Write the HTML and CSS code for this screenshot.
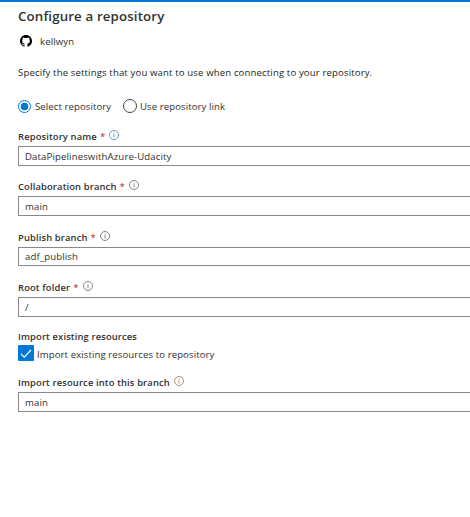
FILE: index.html
```html
<!DOCTYPE html>
<html lang="en">
<head>
<meta charset="utf-8">
<title>Configure a repository</title>
<link rel="stylesheet" href="styles.css">
</head>
<body>
<svg class="symbols" aria-hidden="true">
  <symbol id="info" viewBox="0 0 10 10"><circle cx="5" cy="5" r="4.5" fill="none" stroke="currentColor" stroke-width=".9"/><path d="M5 4.2v3.2M5 2.5v.9" stroke="currentColor" stroke-width=".9"/></symbol>
</svg>
<main class="panel">
  <h1 class="title">Configure a repository</h1>
  <div class="account">
    <svg class="github" viewBox="0 0 16 16"><path d="M8 0C3.58 0 0 3.58 0 8c0 3.54 2.29 6.53 5.47 7.59.4.07.55-.17.55-.38 0-.19-.01-.82-.01-1.49-2.01.37-2.53-.49-2.69-.94-.09-.23-.48-.94-.82-1.13-.28-.15-.68-.52-.01-.53.63-.01 1.08.58 1.23.82.72 1.21 1.87.87 2.33.66.07-.52.28-.87.51-1.07-1.78-.2-3.64-.89-3.64-3.95 0-.87.31-1.59.82-2.15-.08-.2-.36-1.02.08-2.12 0 0 .67-.21 2.2.82.64-.18 1.32-.27 2-.27s1.36.09 2 .27c1.53-1.04 2.2-.82 2.2-.82.44 1.1.16 1.92.08 2.12.51.56.82 1.27.82 2.15 0 3.07-1.87 3.75-3.65 3.95.29.25.54.73.54 1.48 0 1.07-.01 1.93-.01 2.2 0 .21.15.46.55.38A8.01 8.01 0 0 0 16 8c0-4.42-3.58-8-8-8z"/></svg>
    <span class="user">kellwyn</span>
  </div>
  <p class="intro">Specify the settings that you want to use when connecting to your repository.</p>
  <div class="radios">
    <span class="radio checked"></span><span class="option first">Select repository</span>
    <span class="radio"></span><span class="option second">Use repository link</span>
  </div>
  <section class="field">
    <div class="label"><span class="name">Repository name</span><span class="star">*</span><svg class="info blue"><use href="#info"/></svg></div>
    <div class="input">DataPipelineswithAzure-Udacity</div>
  </section>
  <section class="field">
    <div class="label"><span class="name">Collaboration branch</span><span class="star">*</span><svg class="info"><use href="#info"/></svg></div>
    <div class="input">main</div>
  </section>
  <section class="field lower">
    <div class="label"><span class="name">Publish branch</span><span class="star">*</span><svg class="info"><use href="#info"/></svg></div>
    <div class="input short">adf_publish</div>
  </section>
  <section class="field">
    <div class="label"><span class="name">Root folder</span><span class="star">*</span><svg class="info"><use href="#info"/></svg></div>
    <div class="input">/</div>
  </section>
  <div class="group"><span class="name">Import existing resources</span></div>
  <div class="check">
    <svg class="box" viewBox="0 0 16 16"><rect width="16" height="16" rx="1" fill="#0078d4"/><path d="M3 8.8l3.2 3.3L13 5" fill="none" stroke="#fff" stroke-width="1.2"/></svg>
    <span class="check-text">Import existing resources to repository</span>
  </div>
  <section class="field last">
    <div class="label"><span class="name">Import resource into this branch</span><svg class="info tan"><use href="#info"/></svg></div>
    <div class="input">main</div>
  </section>
</main>
</body>
</html>
```
FILE: styles.css
```css
* { box-sizing: border-box; }
body { margin: 0; background: #fff; color: #323130; font: 9.6px/14px "Open Sans", "Noto Sans", sans-serif; letter-spacing: .13px; overflow: hidden; }
.symbols { display: none; }
.panel { height: 517px; border-top: 2px solid #0078d4; padding-left: 18px; white-space: nowrap; }
.title { margin: 0; padding-top: 4px; height: 30px; font-size: 13.3px; line-height: 20px; font-weight: 600; letter-spacing: .13px; }
.account { display: flex; align-items: center; height: 18px; padding-left: 2px; }
.github { width: 12px; height: 12px; margin-right: 8px; fill: #000; }
.user { padding-top: 1px; }
.intro { margin: 15px 0 0; height: 14px; line-height: 15px; color: #201f1e; }
.radios { display: flex; align-items: center; height: 14px; margin-top: 20px; }
.radio { width: 14px; height: 14px; flex: none; border: 1px solid #484644; border-radius: 50%; }
.radio.checked { width: 13px; height: 13px; border-color: #0078d4; background: radial-gradient(circle, #0078d4 0 3.5px, #fff 4.2px); }
.option { margin-left: 4px; padding-top: 1px; letter-spacing: .08px; }
.option.first { width: 88px; }
.option.second { margin-left: 3px; }
.field { height: 50px; }
.radios + .field { margin-top: 16px; }
.lower { height: 51px; }
.lower .label { height: 18px; padding-top: 2px; }
.label { display: flex; height: 17px; padding-top: 1px; }
.name { font-size: 9.4px; font-weight: 600; letter-spacing: .14px; }
.star { margin-left: 3px; color: #a4262c; }
.info { width: 10px; height: 10px; margin-left: 4px; color: #797775; }
.info.blue { color: #5c93bd; }
.info.tan { color: #a08a66; }
.input { display: flex; align-items: center; height: 20px; padding: 1px 0 0 6px; border: 1px solid #8a8886; border-right: 0; }
.input.short { height: 19px; padding-top: 0; }
.group { height: 15px; }
.check { display: flex; align-items: center; height: 16px; gap: 3px; }
.check-text { padding-top: 3px; letter-spacing: .09px; }
.box { width: 16px; height: 16px; }
.last { margin-top: 14px; }
```
